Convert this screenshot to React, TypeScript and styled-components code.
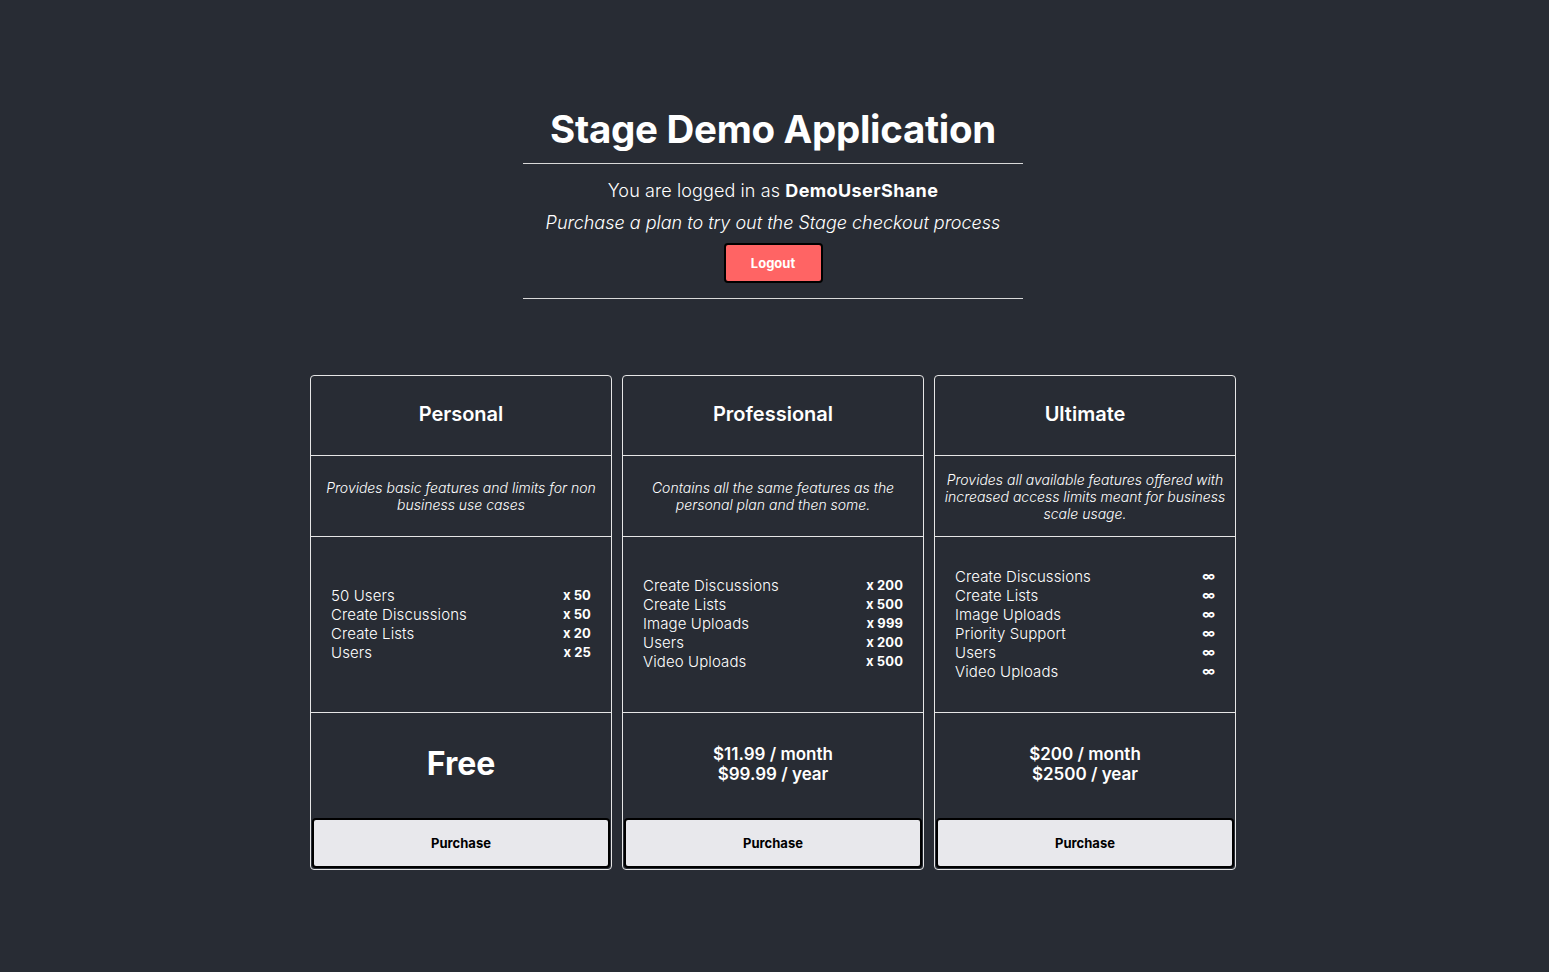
import styled, { createGlobalStyle } from "styled-components";

type Plan = {
  name: string;
  description: string;
  features: [string, string][];
  price: string[];
  free?: boolean;
};

const plans: Plan[] = [
  {
    name: "Personal",
    description: "Provides basic features and limits for non business use cases",
    features: [
      ["50 Users", "x 50"],
      ["Create Discussions", "x 50"],
      ["Create Lists", "x 20"],
      ["Users", "x 25"],
    ],
    price: ["Free"],
    free: true,
  },
  {
    name: "Professional",
    description: "Contains all the same features as the personal plan and then some.",
    features: [
      ["Create Discussions", "x 200"],
      ["Create Lists", "x 500"],
      ["Image Uploads", "x 999"],
      ["Users", "x 200"],
      ["Video Uploads", "x 500"],
    ],
    price: ["$11.99 / month", "$99.99 / year"],
  },
  {
    name: "Ultimate",
    description:
      "Provides all available features offered with increased access limits meant for business scale usage.",
    features: [
      ["Create Discussions", "∞"],
      ["Create Lists", "∞"],
      ["Image Uploads", "∞"],
      ["Priority Support", "∞"],
      ["Users", "∞"],
      ["Video Uploads", "∞"],
    ],
    price: ["$200 / month", "$2500 / year"],
  },
];

function App() {
  return (
    <>
      <GlobalStyle />
      <Page>
        <Header>
          <Title>Stage Demo Application</Title>
          <Divider />
          <Welcome>
            You are logged in as <strong>DemoUserShane</strong>
          </Welcome>
          <Tagline>Purchase a plan to try out the Stage checkout process</Tagline>
          <LogoutButton>Logout</LogoutButton>
          <Divider />
        </Header>

        <Plans>
          {plans.map((plan) => (
            <Card key={plan.name}>
              <CardTitle>{plan.name}</CardTitle>
              <Description>{plan.description}</Description>
              <Features>
                <FeatureList>
                  {plan.features.map(([label, value]) => (
                    <FeatureRow key={label}>
                      <span>{label}</span>
                      <Limit>{value}</Limit>
                    </FeatureRow>
                  ))}
                </FeatureList>
              </Features>
              <Price $free={plan.free}>
                {plan.price.map((line) => (
                  <div key={line}>{line}</div>
                ))}
              </Price>
              <PurchaseButton>Purchase</PurchaseButton>
            </Card>
          ))}
        </Plans>
      </Page>
    </>
  );
}

const GlobalStyle = createGlobalStyle`
  html, body {
    margin: 0;
    background: #282c34;
  }
  body {
    font-family: Inter, "Noto Sans", sans-serif;
    color: #ffffff;
  }
`;

const Page = styled.div`
  min-height: 972px;
  display: flex;
  flex-direction: column;
  align-items: center;
  padding: 105px 3px 0 0;
  box-sizing: border-box;
`;

const Header = styled.header`
  width: 500px;
  display: flex;
  flex-direction: column;
  align-items: center;
`;

const Title = styled.h1`
  margin: 0 0 10px;
  font-size: 38.5px;
  line-height: 48px;
  font-weight: 700;
  letter-spacing: -0.3px;
`;

const Divider = styled.hr`
  width: 100%;
  margin: 0;
  border: none;
  border-top: 1px solid #d9d9d9;
`;

const Welcome = styled.p`
  margin: 15px 0 0;
  font-size: 18px;
  line-height: 24px;
  font-weight: 300;
  letter-spacing: 0.1px;

  strong {
    font-weight: 700;
    letter-spacing: 0.4px;
  }
`;

const Tagline = styled.p`
  margin: 8px 0 0;
  font-size: 18px;
  line-height: 24px;
  font-style: italic;
  font-weight: 300;
`;

const LogoutButton = styled.button`
  margin: 8px 0 15px;
  width: 99px;
  height: 40px;
  background: #ff6464;
  color: #ffffff;
  border: 2px solid #000000;
  border-radius: 4px;
  font-family: Inter, sans-serif;
  font-size: 13px;
  font-weight: 700;
`;

const Plans = styled.div`
  margin-top: 76px;
  display: grid;
  grid-template-columns: repeat(3, 302px);
  gap: 10px;
`;

const Card = styled.div`
  display: flex;
  flex-direction: column;
  border: 1px solid #e6e6e6;
  border-radius: 4px;
  overflow: hidden;
`;

const Section = styled.div`
  display: flex;
  align-items: center;
  justify-content: center;
  text-align: center;
  box-sizing: border-box;
  border-bottom: 1px solid #e6e6e6;
`;

const CardTitle = styled(Section)`
  height: 80px;
  padding-bottom: 3px;
  font-size: 20px;
  font-weight: 600;
`;

const Description = styled(Section)`
  height: 81px;
  padding: 0 7px;
  font-size: 14px;
  line-height: 17px;
  font-style: italic;
  font-weight: 300;
`;

const Features = styled(Section)`
  height: 176px;
  padding: 0 20px 2px;
  justify-content: stretch;
`;

const FeatureList = styled.ul`
  list-style: none;
  margin: 0;
  padding: 0;
  width: 100%;
`;

const FeatureRow = styled.li`
  display: flex;
  justify-content: space-between;
  font-size: 15px;
  line-height: 19px;
  font-weight: 300;
  letter-spacing: 0.1px;
  text-align: left;
`;

const Limit = styled.span`
  font-size: 13px;
  font-weight: 700;
`;

const Price = styled.div<{ $free?: boolean }>`
  height: 105px;
  padding-bottom: 3px;
  box-sizing: border-box;
  display: flex;
  flex-direction: column;
  align-items: center;
  justify-content: center;
  font-size: ${(p) => (p.$free ? "32px" : "17px")};
  line-height: ${(p) => (p.$free ? "38px" : "20px")};
  font-weight: ${(p) => (p.$free ? 700 : 600)};
`;

const PurchaseButton = styled.button`
  margin: 0 1px 1px;
  height: 50px;
  background: #e8e8ec;
  color: #000000;
  border: 2px solid #000000;
  border-radius: 4px;
  font-family: Inter, sans-serif;
  font-size: 13px;
  font-weight: 700;
`;

export default App;
